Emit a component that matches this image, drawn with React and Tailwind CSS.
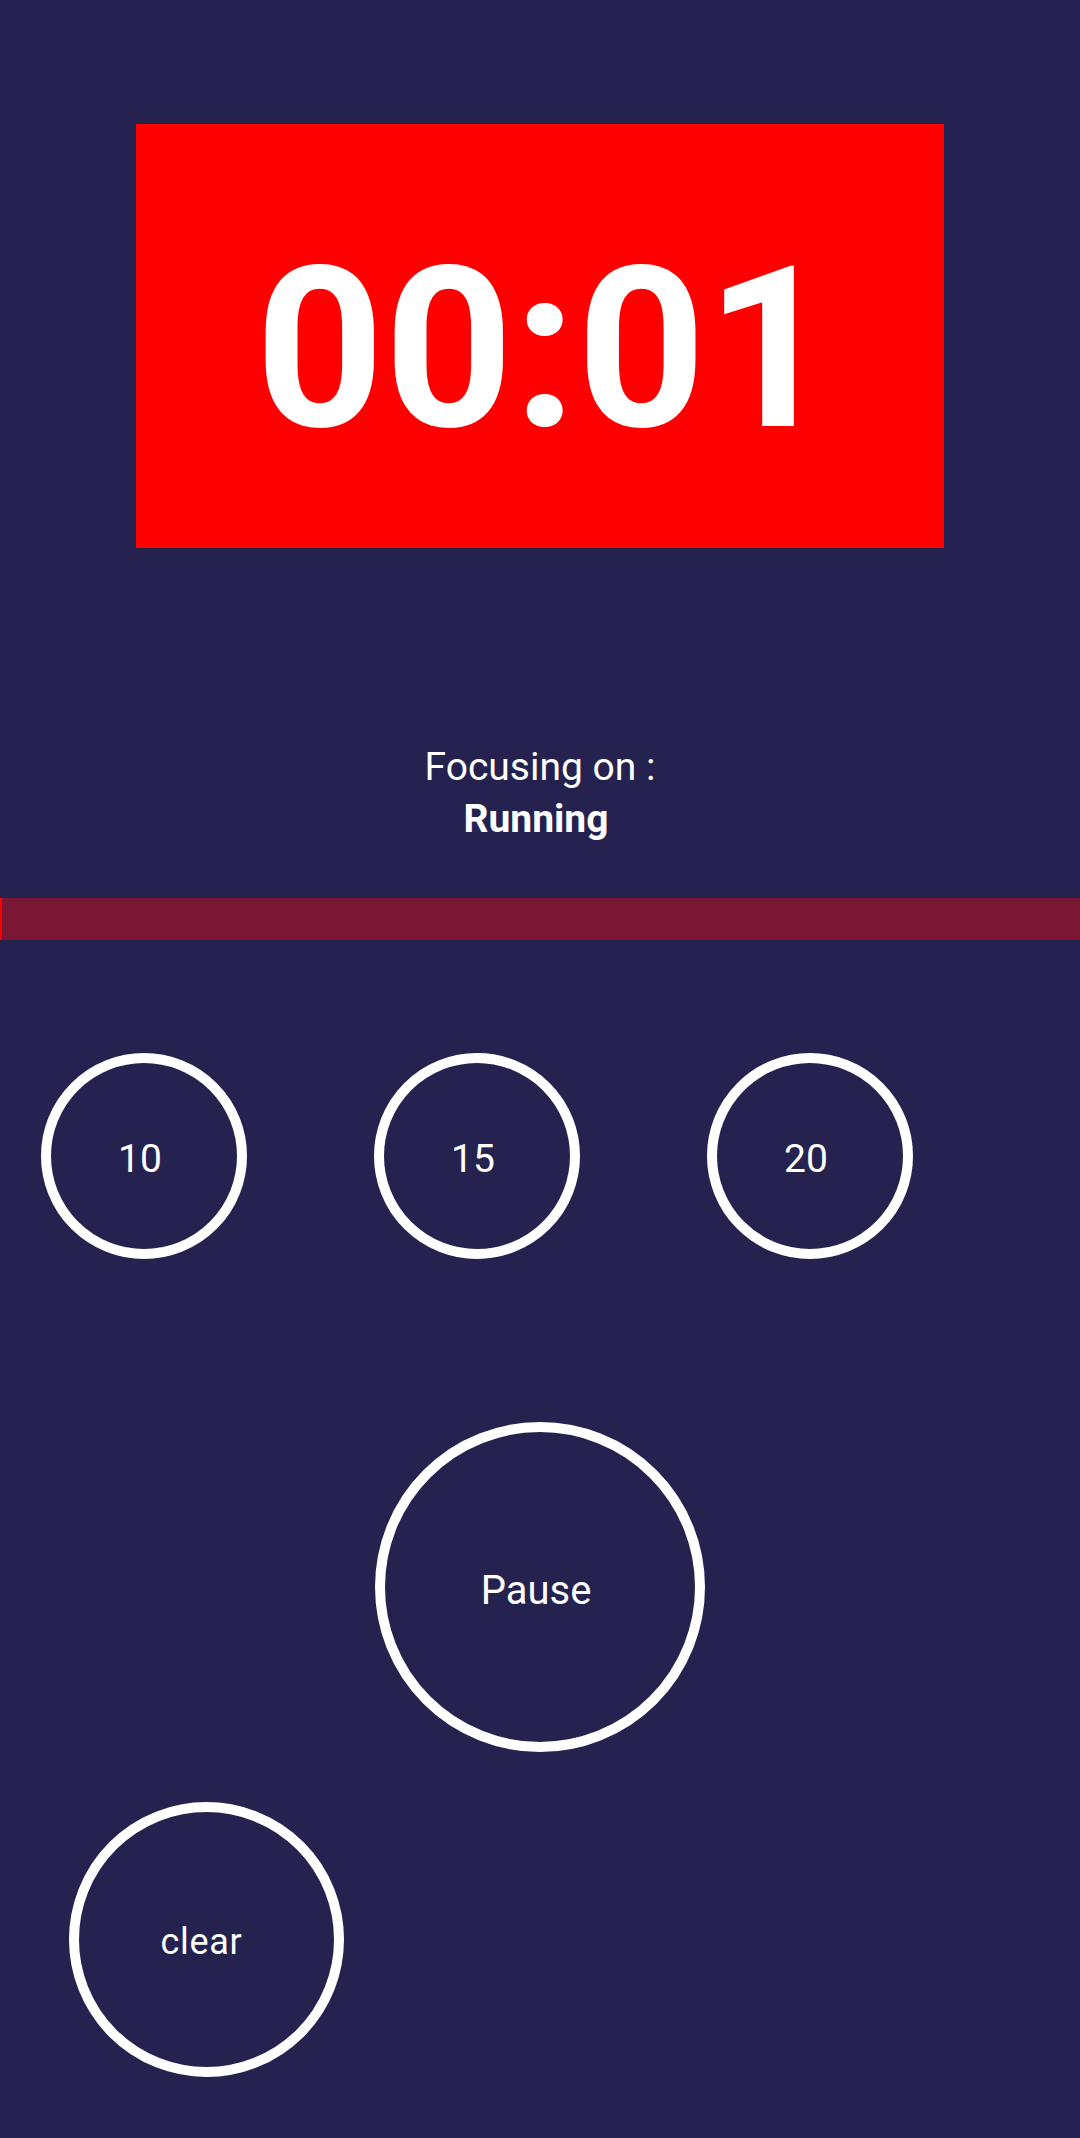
import React from 'react';

function Ring({ size, children, className = '' }) {
  return (
    <button
      className={`flex shrink-0 items-center justify-center rounded-full border-[10px] border-white text-white ${size} ${className}`}
    >
      {children}
    </button>
  );
}

export default function App() {
  const presets = ['10', '15', '20'];

  return (
    <div
      className="min-h-[2138px] w-full bg-[#25224f] pt-[124px] text-white"
      style={{ fontFamily: 'Roboto, "Noto Sans", sans-serif' }}
    >
      <div className="mx-[136px] flex h-[424px] items-center justify-center bg-[#ff0000] pl-[10px] pt-[26px]">
        <span className="text-[225px] font-bold leading-none">00:01</span>
      </div>

      <div className="mt-[193px] flex flex-col items-center text-[39px] leading-[52px]">
        <span className="font-normal">Focusing on :</span>
        <span className="pr-2 font-bold">Running</span>
      </div>

      <div className="mt-[53px] h-[42px] w-full bg-[#7a1734]">
        <div className="h-full w-[2px] bg-[#ff0000]" />
      </div>

      <div className="mt-[113px] flex gap-[127px] pl-[41px]">
        {presets.map(p => (
          <Ring key={p} size="h-[206px] w-[206px]" className="pr-2 pt-[6px] text-[39px]">
            {p}
          </Ring>
        ))}
      </div>

      <div className="mt-[163px] flex justify-center">
        <Ring size="h-[330px] w-[330px]" className="pr-2 pt-2 text-[40px]">
          Pause
        </Ring>
      </div>

      <div className="mt-[50px] pl-[69px]">
        <Ring size="h-[275px] w-[275px]" className="pr-[10px] pt-1 text-[36px] tracking-[0.02em]">
          clear
        </Ring>
      </div>
    </div>
  );
}
